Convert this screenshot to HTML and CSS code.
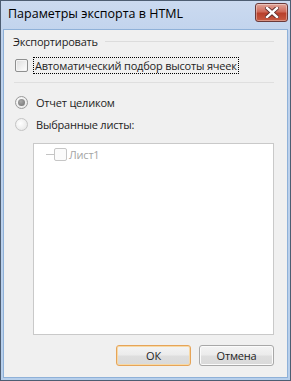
FILE: index.html
```html
<!DOCTYPE html>
<html>
<head>
    <title>Параметры экспорта в HTML</title>
    <meta charset="utf-8">
    <link rel="stylesheet" href="styles.css">
</head>
<body>
    <div class="window">
        <div class="titlebar">
            <div class="title">Параметры экспорта в HTML</div>
            <div class="close">
                <svg width="14" height="11" viewBox="0 0 14 11">
                    <path d="M2 1 L12 10 M12 1 L2 10" stroke="#5a2b2b" stroke-width="4.2" stroke-linecap="square"/>
                    <path d="M2 1 L12 10 M12 1 L2 10" stroke="#ffffff" stroke-width="2.4" stroke-linecap="square"/>
                </svg>
            </div>
        </div>
        <div class="content">
            <div class="group-head">
                <span>Экспортировать</span>
                <div class="line"></div>
            </div>
            <div class="row check-row">
                <span class="checkbox"></span>
                <span class="focus">Автоматический подбор высоты ячеек</span>
            </div>
            <div class="sep"></div>
            <div class="row radio-row">
                <span class="radio checked"></span>
                <span>Отчет целиком</span>
            </div>
            <div class="row radio-row">
                <span class="radio"></span>
                <span>Выбранные листы:</span>
            </div>
            <div class="listbox">
                <div class="tree-item">
                    <span class="dash"></span>
                    <span class="checkbox small disabled"></span>
                    <span class="item-text">Лист1</span>
                </div>
            </div>
            <div class="buttons">
                <button class="btn default">ОК</button>
                <button class="btn">Отмена</button>
            </div>
        </div>
    </div>
</body>
</html>
```
FILE: styles.css
```css
*{
    margin: 0;
    padding: 0;
    box-sizing: border-box;
}
body{
    font-family: "Open Sans", "Noto Sans", sans-serif;
    font-size: 11px;
    letter-spacing: -0.2px;
    color: #1e1e1e;
    background: #ffffff;
}
.window{
    width: 291px;
    height: 381px;
    border: 1px solid #4d5d72;
    background: linear-gradient(#cbdaf0, #bfd2ec 40px, #b7cfeb);
    display: flex;
    flex-direction: column;
    padding: 0 2px 2px 2px;
}
.titlebar{
    height: 28px;
    display: flex;
    justify-content: space-between;
    align-items: flex-start;
}
.title{
    padding: 5px 0 0 5px;
    line-height: 16px;
    font-size: 12.5px;
    letter-spacing: 0;
    color: #000000;
}
.close{
    margin-top: 2px;
    width: 33px;
    height: 19px;
    border: 1px solid #6b3a3a;
    border-radius: 3px;
    background: linear-gradient(#e0a59a, #cf6a5a 45%, #b8402c 55%, #c85a42);
    display: flex;
    justify-content: center;
    align-items: center;
    box-shadow: inset 0 0 0 1px rgba(255,255,255,0.35);
}
.content{
    flex: 1;
    background: #f0f0f0;
    border: 1px solid #8fb1d8;
    display: flex;
    flex-direction: column;
    padding: 0 13px 11px 9px;
}
.group-head{
    display: flex;
    align-items: center;
    height: 22px;
}
.group-head .line{
    flex: 1;
    height: 1px;
    background: #dcdcdc;
    margin-left: 7px;
}
.row{
    display: flex;
    align-items: center;
    height: 22px;
}
.check-row{
    margin-top: 2px;
    padding-left: 2px;
}
.checkbox{
    width: 13px;
    height: 13px;
    border: 1px solid #8e8f8f;
    background: linear-gradient(135deg, #dcdcdc, #ffffff);
    box-shadow: inset 0 0 0 1px #f4f4f4;
    border-radius: 2px;
    margin-right: 8px;
}
.focus{
    outline: 1px dotted #000000;
    padding: 0 1px;
    margin-left: -2px;
    line-height: 15px;
}
.sep{
    height: 1px;
    background: #dfdfdf;
    margin: 6px 0 0 1px;
}
.radio-row{
    padding-left: 2px;
}
.sep + .radio-row{
    margin-top: 8px;
}
.radio{
    width: 13px;
    height: 13px;
    border-radius: 50%;
    border: 1px solid #9a9a9a;
    background: radial-gradient(circle at 40% 40%, #ffffff, #e2e2e2);
    margin-right: 8px;
    display: flex;
    justify-content: center;
    align-items: center;
}
.radio.checked::after{
    content: "";
    width: 7px;
    height: 7px;
    border-radius: 50%;
    background: radial-gradient(circle at 40% 35%, #a8a8a8, #6f6f6f);
}
.radio-row + .radio-row .radio{
    border-color: #c4c4c4;
}
.listbox{
    margin: 8px 0 0 20px;
    height: 192px;
    background: #ffffff;
    border: 1px solid #c9c9c9;
    padding: 2px 0 0 12px;
}
.tree-item{
    display: flex;
    align-items: center;
    height: 16px;
}
.dash{
    width: 8px;
    border-top: 1px solid #c4c4c4;
}
.checkbox.small.disabled{
    width: 13px;
    height: 13px;
    border-color: #c6c6c6;
    background: #fbfbfb;
    box-shadow: none;
    margin: 0 2px 0 0;
}
.item-text{
    color: #a4a4a4;
}
.buttons{
    margin-top: auto;
    display: flex;
    justify-content: flex-end;
    gap: 8px;
}
.btn{
    width: 75px;
    height: 21px;
    font-family: inherit;
    font-size: 11px;
    letter-spacing: -0.2px;
    color: #1e1e1e;
    border: 1px solid #a8a8a8;
    border-radius: 3px;
    background: linear-gradient(#f4f4f4, #ebebeb 48%, #dedede 52%, #d9d9d9);
    box-shadow: inset 0 0 0 1px #fbfbfb;
}
.btn.default{
    border-color: #e6a458;
    box-shadow: inset 0 0 0 1px #f7d9a6;
}
```
